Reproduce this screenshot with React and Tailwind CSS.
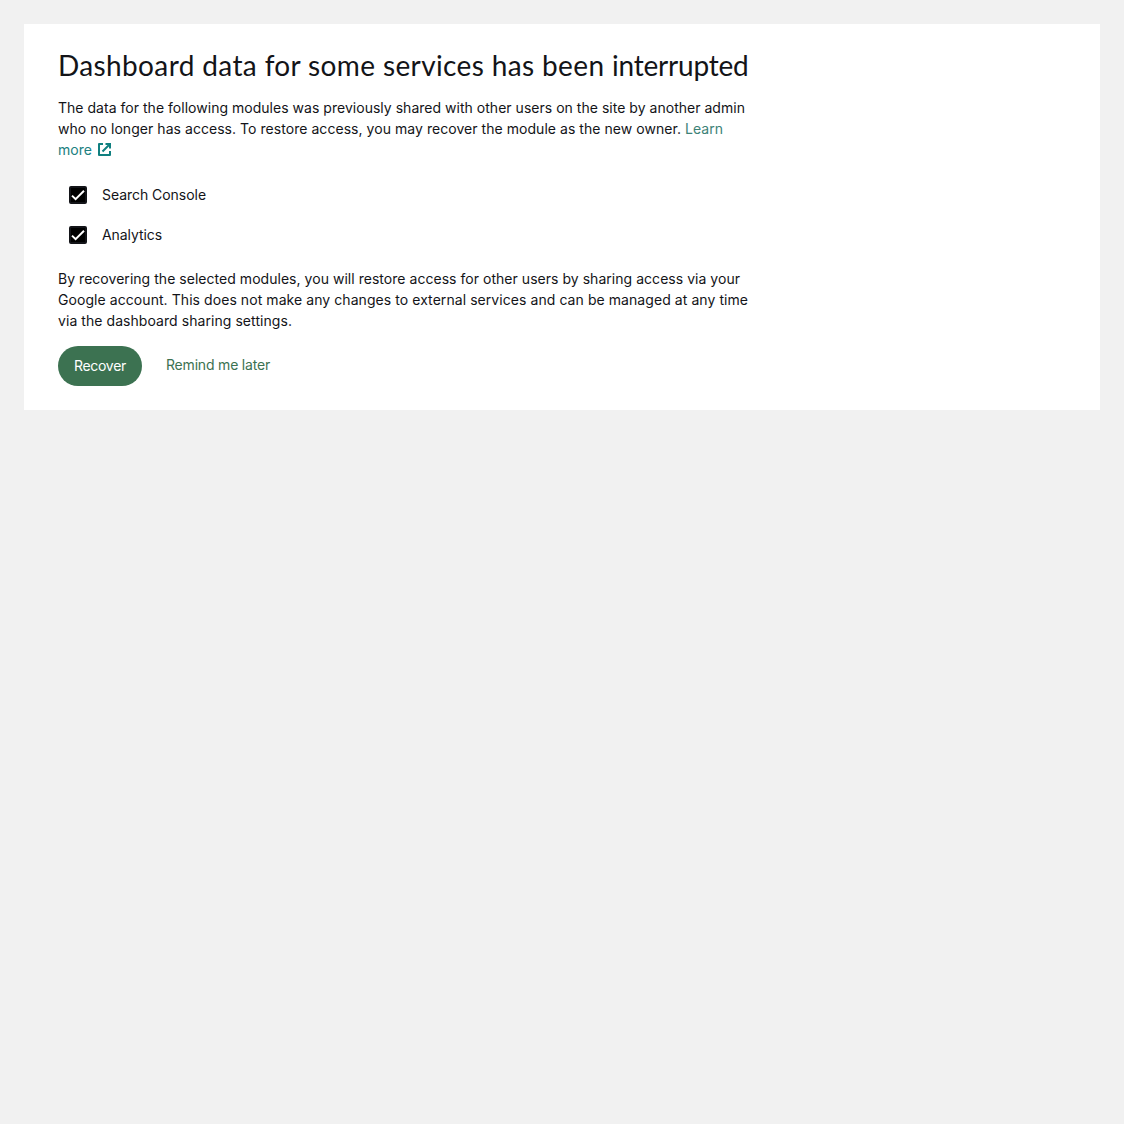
function ExternalIcon() {
  return (
    <svg className="ml-1.5 size-[13px] shrink-0" viewBox="0 0 13 13" fill="none" stroke="#108080" strokeWidth="2" strokeLinejoin="round">
      <path d="M5 1H1v11h11V8" />
      <path d="M7.5 1H12v4.5M12 1L4.5 8.5" strokeLinejoin="miter" />
    </svg>
  );
}

function CheckRow({ label, spacing }) {
  return (
    <label className="flex h-10 items-center">
      <span className="ml-[11px] flex size-[18px] items-center justify-center rounded-xs border-2 border-[#131418] bg-black">
        <svg className="size-[18px] shrink-0" viewBox="0 0 18 18" fill="none" stroke="white" strokeWidth="2">
          <path d="M3 9.6L6.6 13.2L15 4.8" />
        </svg>
      </span>
      <span className={`ml-[15px] text-sm ${spacing}`}>{label}</span>
    </label>
  );
}

export default function App() {
  return (
    <div className="min-h-screen bg-[#f1f1f1] p-6 font-['Inter',sans-serif] text-[#131418]">
      <section className="h-[386px] bg-white pl-[34px] pt-[23px]">
        <h1 className="whitespace-nowrap font-['Lato',sans-serif] text-[28px] leading-9 tracking-[0.37px]">
          Dashboard data for some services has been <span className="tracking-[-0.2px]">interrupted</span>
        </h1>
        <div className="mt-[14px] whitespace-nowrap text-sm leading-[21px]">
          <p className="tracking-[0.024px]">The data for the following modules was previously shared with other users on the site by another admin</p>
          <p className="tracking-[0.046px]">
            who no longer has access. To restore access, you may recover the module as the new owner.{" "}
            <a className="text-[#3c8277]">Learn</a>
          </p>
          <p className="flex items-center tracking-[0.035px] text-[#208080]">
            more
            <ExternalIcon />
          </p>
        </div>
        <div className="mt-[15px]">
          <CheckRow label="Search Console" spacing="tracking-[-0.045px]" />
          <CheckRow label="Analytics" spacing="tracking-[-0.076px]" />
        </div>
        <div className="mt-[13px] whitespace-nowrap text-sm leading-[21px]">
          <p className="tracking-[0.035px]">By recovering the selected modules, you will restore access for other users by sharing access via your</p>
          <p className="tracking-[0.066px]">Google account. This does not make any changes to external services and can be managed at any time</p>
          <p className="tracking-[0.061px]">via the dashboard sharing settings.</p>
        </div>
        <div className="mt-[15px] flex h-10 items-center">
          <button className="h-10 w-[84px] rounded-full bg-[#3c7251] text-sm tracking-[-0.3px] text-white">Recover</button>
          <button className="mb-0.5 ml-6 text-sm tracking-[-0.19px] text-[#3c7251]">Remind me later</button>
        </div>
      </section>
    </div>
  );
}
